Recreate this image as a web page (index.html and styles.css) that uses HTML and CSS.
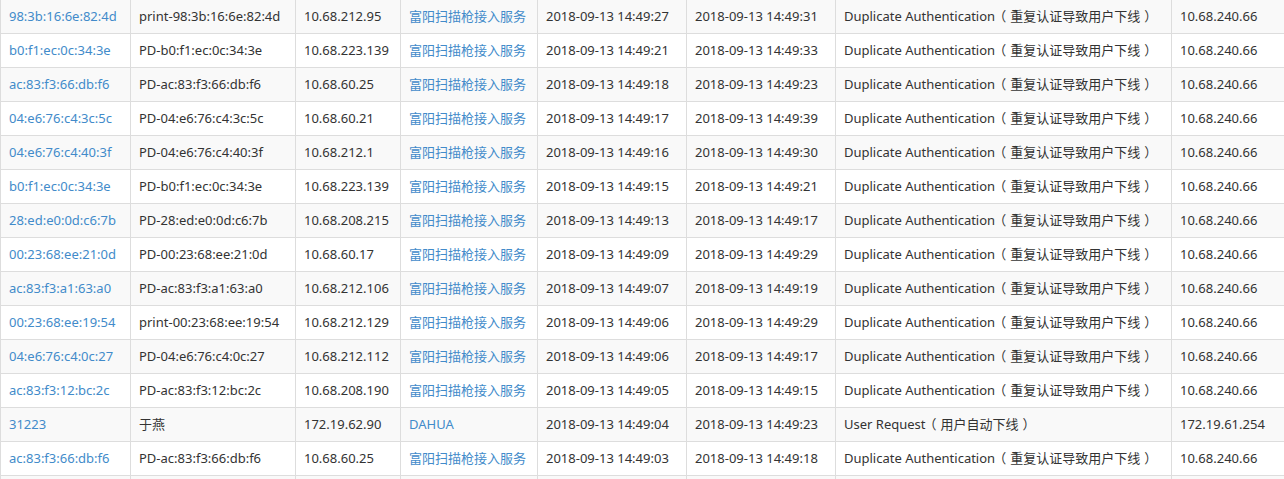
FILE: index.html
```html
<!DOCTYPE html>
<html lang="zh-CN">
<head>
<meta charset="utf-8">
<title>下线记录</title>
<link rel="stylesheet" href="styles.css">
</head>
<body>
<table class="grid">
  <colgroup>
    <col class="c-mac"><col class="c-name"><col class="c-ip"><col class="c-svc"><col class="c-start"><col class="c-end"><col class="c-reason"><col class="c-nas">
  </colgroup>
  <tbody>
    <tr><td><a class="lnk">98:3b:16:6e:82:4d</a></td><td>print-98:3b:16:6e:82:4d</td><td>10.68.212.95</td><td><a class="lnk">富阳扫描枪接入服务</a></td><td>2018-09-13 14:49:27</td><td>2018-09-13 14:49:31</td><td>Duplicate Authentication<span class="po">（</span>重复认证导致用户下线<span class="pc">）</span></td><td>10.68.240.66</td></tr>
    <tr><td><a class="lnk">b0:f1:ec:0c:34:3e</a></td><td>PD-b0:f1:ec:0c:34:3e</td><td>10.68.223.139</td><td><a class="lnk">富阳扫描枪接入服务</a></td><td>2018-09-13 14:49:21</td><td>2018-09-13 14:49:33</td><td>Duplicate Authentication<span class="po">（</span>重复认证导致用户下线<span class="pc">）</span></td><td>10.68.240.66</td></tr>
    <tr><td><a class="lnk">ac:83:f3:66:db:f6</a></td><td>PD-ac:83:f3:66:db:f6</td><td>10.68.60.25</td><td><a class="lnk">富阳扫描枪接入服务</a></td><td>2018-09-13 14:49:18</td><td>2018-09-13 14:49:23</td><td>Duplicate Authentication<span class="po">（</span>重复认证导致用户下线<span class="pc">）</span></td><td>10.68.240.66</td></tr>
    <tr><td><a class="lnk">04:e6:76:c4:3c:5c</a></td><td>PD-04:e6:76:c4:3c:5c</td><td>10.68.60.21</td><td><a class="lnk">富阳扫描枪接入服务</a></td><td>2018-09-13 14:49:17</td><td>2018-09-13 14:49:39</td><td>Duplicate Authentication<span class="po">（</span>重复认证导致用户下线<span class="pc">）</span></td><td>10.68.240.66</td></tr>
    <tr><td><a class="lnk">04:e6:76:c4:40:3f</a></td><td>PD-04:e6:76:c4:40:3f</td><td>10.68.212.1</td><td><a class="lnk">富阳扫描枪接入服务</a></td><td>2018-09-13 14:49:16</td><td>2018-09-13 14:49:30</td><td>Duplicate Authentication<span class="po">（</span>重复认证导致用户下线<span class="pc">）</span></td><td>10.68.240.66</td></tr>
    <tr><td><a class="lnk">b0:f1:ec:0c:34:3e</a></td><td>PD-b0:f1:ec:0c:34:3e</td><td>10.68.223.139</td><td><a class="lnk">富阳扫描枪接入服务</a></td><td>2018-09-13 14:49:15</td><td>2018-09-13 14:49:21</td><td>Duplicate Authentication<span class="po">（</span>重复认证导致用户下线<span class="pc">）</span></td><td>10.68.240.66</td></tr>
    <tr><td><a class="lnk">28:ed:e0:0d:c6:7b</a></td><td>PD-28:ed:e0:0d:c6:7b</td><td>10.68.208.215</td><td><a class="lnk">富阳扫描枪接入服务</a></td><td>2018-09-13 14:49:13</td><td>2018-09-13 14:49:17</td><td>Duplicate Authentication<span class="po">（</span>重复认证导致用户下线<span class="pc">）</span></td><td>10.68.240.66</td></tr>
    <tr><td><a class="lnk">00:23:68:ee:21:0d</a></td><td>PD-00:23:68:ee:21:0d</td><td>10.68.60.17</td><td><a class="lnk">富阳扫描枪接入服务</a></td><td>2018-09-13 14:49:09</td><td>2018-09-13 14:49:29</td><td>Duplicate Authentication<span class="po">（</span>重复认证导致用户下线<span class="pc">）</span></td><td>10.68.240.66</td></tr>
    <tr><td><a class="lnk">ac:83:f3:a1:63:a0</a></td><td>PD-ac:83:f3:a1:63:a0</td><td>10.68.212.106</td><td><a class="lnk">富阳扫描枪接入服务</a></td><td>2018-09-13 14:49:07</td><td>2018-09-13 14:49:19</td><td>Duplicate Authentication<span class="po">（</span>重复认证导致用户下线<span class="pc">）</span></td><td>10.68.240.66</td></tr>
    <tr><td><a class="lnk">00:23:68:ee:19:54</a></td><td>print-00:23:68:ee:19:54</td><td>10.68.212.129</td><td><a class="lnk">富阳扫描枪接入服务</a></td><td>2018-09-13 14:49:06</td><td>2018-09-13 14:49:29</td><td>Duplicate Authentication<span class="po">（</span>重复认证导致用户下线<span class="pc">）</span></td><td>10.68.240.66</td></tr>
    <tr><td><a class="lnk">04:e6:76:c4:0c:27</a></td><td>PD-04:e6:76:c4:0c:27</td><td>10.68.212.112</td><td><a class="lnk">富阳扫描枪接入服务</a></td><td>2018-09-13 14:49:06</td><td>2018-09-13 14:49:17</td><td>Duplicate Authentication<span class="po">（</span>重复认证导致用户下线<span class="pc">）</span></td><td>10.68.240.66</td></tr>
    <tr><td><a class="lnk">ac:83:f3:12:bc:2c</a></td><td>PD-ac:83:f3:12:bc:2c</td><td>10.68.208.190</td><td><a class="lnk">富阳扫描枪接入服务</a></td><td>2018-09-13 14:49:05</td><td>2018-09-13 14:49:15</td><td>Duplicate Authentication<span class="po">（</span>重复认证导致用户下线<span class="pc">）</span></td><td>10.68.240.66</td></tr>
    <tr><td><a class="lnk">31223</a></td><td>于燕</td><td>172.19.62.90</td><td><a class="lnk">DAHUA</a></td><td>2018-09-13 14:49:04</td><td>2018-09-13 14:49:23</td><td>User Request<span class="po">（</span>用户自动下线<span class="pc">）</span></td><td>172.19.61.254</td></tr>
    <tr><td><a class="lnk">ac:83:f3:66:db:f6</a></td><td>PD-ac:83:f3:66:db:f6</td><td>10.68.60.25</td><td><a class="lnk">富阳扫描枪接入服务</a></td><td>2018-09-13 14:49:03</td><td>2018-09-13 14:49:18</td><td>Duplicate Authentication<span class="po">（</span>重复认证导致用户下线<span class="pc">）</span></td><td>10.68.240.66</td></tr>
    <tr><td></td><td></td><td></td><td></td><td></td><td></td><td></td><td></td></tr>
  </tbody>
</table>
</body>
</html>
```
FILE: styles.css
```css
html, body {
  margin: 0;
  padding: 0;
  overflow: hidden;
  background: #fff;
}
body {
  font-family: "Noto Sans", "Noto Sans CJK SC", sans-serif;
  font-size: 13px;
  color: #333;
}
.grid {
  border-collapse: collapse;
  table-layout: fixed;
  width: 1285px;
  margin-top: -1px;
}
.c-mac { width: 130px; }
.c-name { width: 165px; }
.c-ip { width: 105px; }
.c-svc { width: 137px; }
.c-start { width: 149px; }
.c-end { width: 149px; }
.c-reason { width: 336px; }
.c-nas { width: 114px; }
.grid td {
  border: 1px solid #ddd;
  padding: 8px;
  line-height: 17px;
  height: 17px;
  white-space: nowrap;
  overflow: hidden;
  vertical-align: middle;
}
.grid tr:nth-child(odd) td {
  background: #f9f9f9;
}
.lnk {
  color: #428bca;
  text-decoration: none;
}
.po {
  margin: 0 4px 0 -2px;
}
.pc {
  margin: 0 0 0 4px;
}
```
